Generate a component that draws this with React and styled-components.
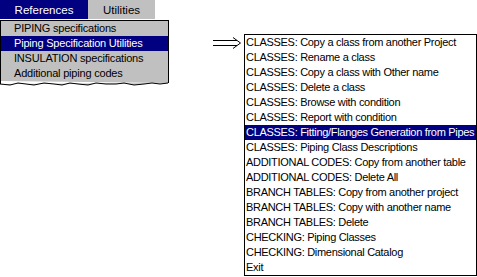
import styled, { createGlobalStyle } from "styled-components";

const GlobalStyle = createGlobalStyle`
  html, body {
    margin: 0;
    padding: 0;
    background: #ffffff;
  }
  body {
    font-family: "Liberation Sans", Arial, sans-serif;
    font-size: 11px;
  }
`;

const Page = styled.div`
  display: flex;
  align-items: flex-start;
  width: 477px;
  height: 277px;
  overflow: hidden;
`;

const LeftColumn = styled.div`
  display: flex;
  flex-direction: column;
  width: 169px;
`;

const MenuBar = styled.div`
  display: flex;
  height: 19px;
`;

const MenuTab = styled.div`
  display: flex;
  align-items: center;
  justify-content: center;
  width: ${(p) => p.$width}px;
  background: ${(p) => (p.$active ? "#000080" : "#c0c0c0")};
  color: ${(p) => (p.$active ? "#ffffff" : "#000000")};
  font-size: 11.5px;
`;

const Panel = styled.div`
  margin-top: 1px;
  background: #c0c0c0;
  border-top: 1px solid #000000;
  border-left: 1px solid #000000;
  border-right: 1px solid #000000;
`;

const PanelItem = styled.div`
  height: 15px;
  line-height: 15px;
  padding-left: 13px;
  font-size: 11px;
  letter-spacing: -0.2px;
  white-space: nowrap;
  background: ${(p) => (p.$selected ? "#000080" : "transparent")};
  color: ${(p) => (p.$selected ? "#ffffff" : "#000000")};
`;

const TornEdge = styled.svg`
  display: block;
  width: 169px;
  height: 7px;
`;

const Arrow = styled.svg`
  display: block;
  margin: 37px 0 0 44px;
  width: 29px;
  height: 12px;
`;

const MenuBox = styled.div`
  margin: 34px 0 0 2px;
  width: 231px;
  border: 1px solid #000000;
  background: #ffffff;
  overflow: hidden;
`;

const MenuItem = styled.div`
  height: 15px;
  line-height: 15px;
  padding-left: 1px;
  white-space: nowrap;
  letter-spacing: -0.3px;
  background: ${(p) => (p.$selected ? "#000080" : "transparent")};
  color: ${(p) => (p.$selected ? "#ffffff" : "#000000")};
`;

const panelItems = [
  "PIPING specifications",
  "Piping Specification Utilities",
  "INSULATION specifications",
  "Additional piping codes",
];

const menuItems = [
  "CLASSES: Copy a class from another Project",
  "CLASSES: Rename a class",
  "CLASSES: Copy a class with Other name",
  "CLASSES: Delete a class",
  "CLASSES: Browse with condition",
  "CLASSES: Report with condition",
  "CLASSES: Fitting/Flanges Generation from Pipes",
  "CLASSES: Piping Class Descriptions",
  "ADDITIONAL CODES: Copy from another table",
  "ADDITIONAL CODES: Delete All",
  "BRANCH TABLES: Copy from another project",
  "BRANCH TABLES: Copy with another name",
  "BRANCH TABLES: Delete",
  "CHECKING: Piping Classes",
  "CHECKING: Dimensional Catalog",
  "Exit",
];

const App = () => {
  const edge =
    "M0,3 L10,4 L18,2 L26,3 L34,4 L44,2 L54,3 L62,4 L70,2 L78,3 L88,4 L96,2 L106,3 L116,3 L124,2 L134,4 L144,3 L152,2 L160,3 L168,2";

  return (
    <Page>
      <GlobalStyle />
      <LeftColumn>
        <MenuBar>
          <MenuTab $width={88} $active>
            References
          </MenuTab>
          <MenuTab $width={67}>Utilities</MenuTab>
        </MenuBar>
        <Panel>
          {panelItems.map((v, i) => (
            <PanelItem key={i} $selected={i === 1}>
              {v}
            </PanelItem>
          ))}
        </Panel>
        <TornEdge viewBox="0 0 169 7">
          <path d={`M0,0 L169,0 L169,2 ${edge.replace("M", "L")} Z`} fill="#c0c0c0" />
          <line x1="0.5" y1="0" x2="0.5" y2="3" stroke="#000" />
          <line x1="168.5" y1="0" x2="168.5" y2="2" stroke="#000" />
          <path d={edge} fill="none" stroke="#000" strokeWidth="1" />
        </TornEdge>
      </LeftColumn>
      <Arrow viewBox="0 0 29 12">
        <path d="M0,3.5 H24 M0,8.5 H24" stroke="#000" strokeWidth="1" fill="none" />
        <path d="M20,0.5 L27.5,6 L20,11.5" stroke="#000" strokeWidth="1" fill="none" />
      </Arrow>
      <MenuBox>
        {menuItems.map((v, i) => (
          <MenuItem key={i} $selected={i === 6}>
            {v}
          </MenuItem>
        ))}
      </MenuBox>
    </Page>
  );
};

export default App;
